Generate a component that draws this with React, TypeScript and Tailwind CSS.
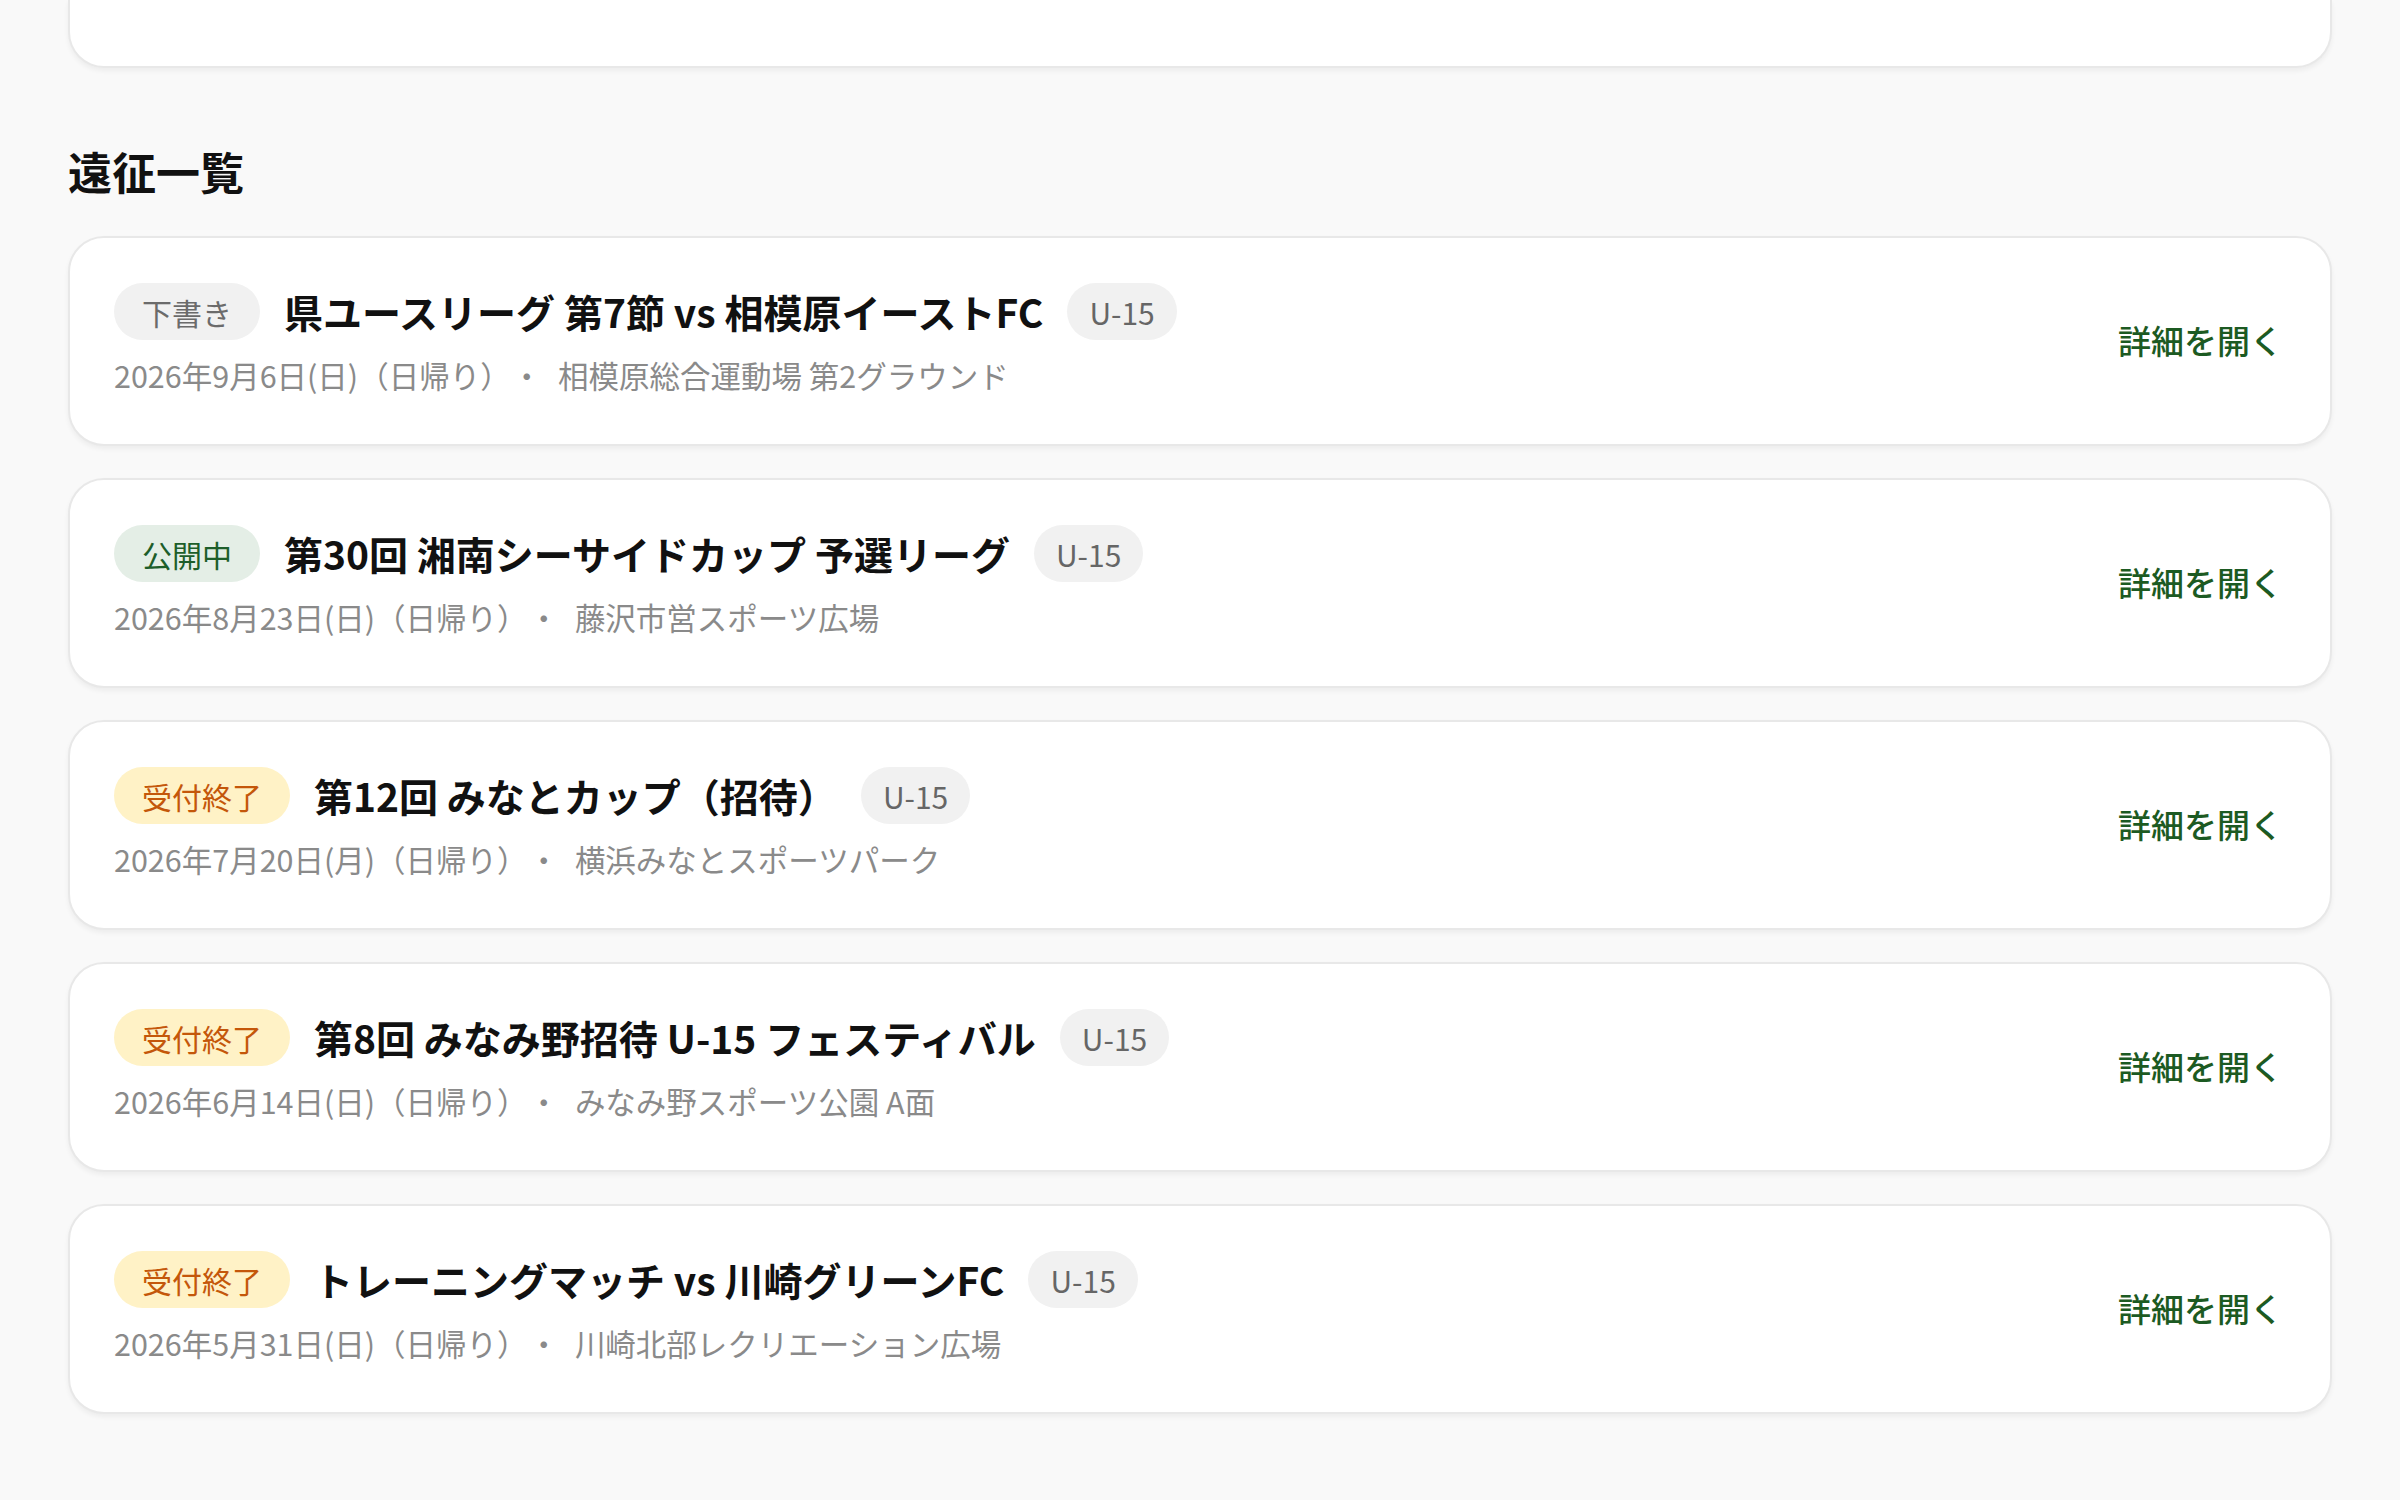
type Status = 'draft' | 'open' | 'closed'

interface Trip {
  status: Status
  title: string
  category: string
  date: string
  venue: string
}

const trips: Trip[] = [
  {status: 'draft', title: '県ユースリーグ 第7節 vs 相模原イーストFC', category: 'U-15', date: '2026年9月6日(日)（日帰り）', venue: '相模原総合運動場 第2グラウンド'},
  {status: 'open', title: '第30回 湘南シーサイドカップ 予選リーグ', category: 'U-15', date: '2026年8月23日(日)（日帰り）', venue: '藤沢市営スポーツ広場'},
  {status: 'closed', title: '第12回 みなとカップ（招待）', category: 'U-15', date: '2026年7月20日(月)（日帰り）', venue: '横浜みなとスポーツパーク'},
  {status: 'closed', title: '第8回 みなみ野招待 U-15 フェスティバル', category: 'U-15', date: '2026年6月14日(日)（日帰り）', venue: 'みなみ野スポーツ公園 A面'},
  {status: 'closed', title: 'トレーニングマッチ vs 川崎グリーンFC', category: 'U-15', date: '2026年5月31日(日)（日帰り）', venue: '川崎北部レクリエーション広場'},
]

const badge: Record<Status, {label: string; className: string}> = {
  draft: {label: '下書き', className: 'bg-[#f1f1f1] text-[#6b6b6b]'},
  open: {label: '公開中', className: 'bg-[#e4eee6] text-[#1d5e2a]'},
  closed: {label: '受付終了', className: 'bg-[#fff2c6] text-[#c4570a]'},
}

function TripCard({trip}: {trip: Trip}) {
  const b = badge[trip.status]
  return (
    <div className="flex items-center justify-between rounded-[36px] border-2 border-[#e8e8e8] bg-white pl-[44px] pr-[47px] pt-[45px] pb-[46px] shadow-[0_3px_5px_rgba(0,0,0,0.05)]">
      <div className="flex flex-col gap-[13px]">
        <div className="flex items-center">
          <span className={`flex h-[57px] items-center rounded-full px-[28px] text-[30px] leading-none ${b.className}`}>{b.label}</span>
          <span className="ml-[24px] text-[39px] font-bold leading-none text-[#111]">{trip.title}</span>
          <span className="ml-[24px] flex h-[57px] items-center rounded-full bg-[#f1f1f1] px-[22px] text-[30px] leading-none text-[#666]">{trip.category}</span>
        </div>
        <div className="text-[30.5px] leading-[45px] text-[#8a8a8a]">
          {trip.date}<span className="mx-[16px]">・</span>{trip.venue}
        </div>
      </div>
      <span className="text-[33px] font-medium text-[#1c5a22]">詳細を開く</span>
    </div>
  )
}

export default function App() {
  return (
    <div className="min-h-[1500px] bg-[#f9f9f9] px-[68px] pb-[90px] font-['Noto_Sans_CJK_JP','Noto_Sans',sans-serif]">
      <div className="h-[68px] rounded-b-[36px] border-x-2 border-b-2 border-[#e8e8e8] bg-white shadow-[0_3px_5px_rgba(0,0,0,0.05)]" />
      <h2 className="mt-[70px] text-[44px] font-bold leading-[66px] text-[#111]">遠征一覧</h2>
      <div className="mt-[32px] flex flex-col gap-[32px]">
        {trips.map((t) => (
          <TripCard key={t.title} trip={t} />
        ))}
      </div>
    </div>
  )
}
